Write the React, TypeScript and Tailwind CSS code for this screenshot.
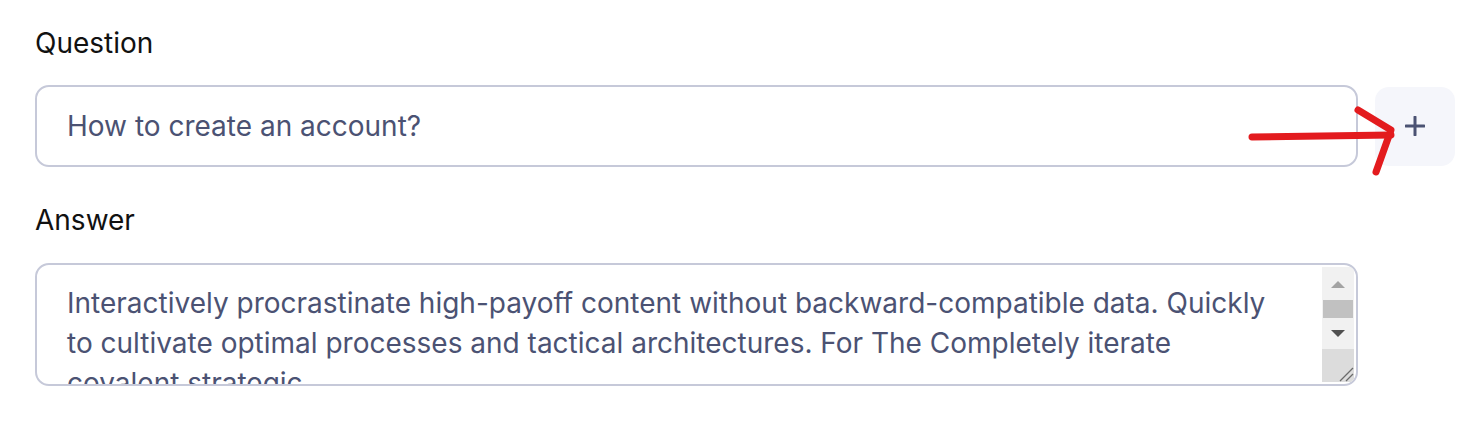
import { useState } from "react";

const answerText =
	"Interactively procrastinate high-payoff content without backward-compatible data. Quickly to cultivate optimal processes and tactical architectures. For The Completely iterate covalent strategic";

function FakeScrollbar() {
	return (
		<div className="absolute right-[2px] top-[2px] bottom-[2px] w-[32px] flex flex-col bg-[#f1f1f1] pointer-events-none">
			<div className="h-[34px] flex items-center justify-center pt-[2px]">
				<div className="w-0 h-0 border-l-[7px] border-r-[7px] border-b-[7px] border-l-transparent border-r-transparent border-b-[#a3a3a3]" />
			</div>
			<div className="mx-[1px] h-[18px] bg-[#c1c1c1]" />
			<div className="h-[32px] flex items-center justify-center">
				<div className="w-0 h-0 border-l-[7px] border-r-[7px] border-t-[7px] border-l-transparent border-r-transparent border-t-[#505050]" />
			</div>
			<div className="flex-1" />
			<div className="relative h-[34px] bg-[#dcdcdc]">
				<svg className="absolute right-0 bottom-0" width="18" height="18" viewBox="0 0 18 18">
					<path d="M4 17 L17 4 M10 17 L17 10" stroke="#6b6b6b" strokeWidth="1.3" />
				</svg>
			</div>
		</div>
	);
}

export default function App() {
	const [question, setQuestion] = useState("How to create an account?");
	const [answer, setAnswer] = useState(answerText);

	return (
		<div className="relative w-[1476px] h-[448px] bg-white font-['Inter',sans-serif] pl-[35px] pt-[25px]">
			<label className="block text-[28px] leading-9 text-[#111111] mb-[24px]">Question</label>
			<div className="flex items-center gap-[17px]">
				<input
					value={question}
					onChange={(e) => setQuestion(e.target.value)}
					className="w-[1323px] h-[82px] rounded-[14px] border-2 border-[#c6c9d9] px-[30px] text-[28px] text-[#4b5273] outline-none"
				/>
				<button className="w-[80px] h-[79px] rounded-[14px] bg-[#f5f6fb] flex items-center justify-center">
					<svg width="20" height="20" viewBox="0 0 20 20">
						<path d="M10 1 v18 M1 10 h18" stroke="#4b5273" strokeWidth="3" strokeLinecap="round" />
					</svg>
				</button>
			</div>
			<label className="block text-[28px] leading-9 text-[#111111] mt-[35px] mb-[25px]">Answer</label>
			<div className="relative w-[1323px] h-[123px] rounded-[14px] border-2 border-[#c6c9d9] overflow-hidden">
				<textarea
					value={answer}
					onChange={(e) => setAnswer(e.target.value)}
					className="block w-full h-full resize-none pl-[30px] pr-[75px] pt-[18px] text-[28px] leading-[40px] text-[#4b5273] outline-none overflow-hidden"
				/>
				<FakeScrollbar />
			</div>

			{/* red hand-drawn arrow annotation */}
			<svg className="absolute left-0 top-0 pointer-events-none" width="1476" height="448">
				<path d="M1252 137 L1391 135" stroke="#e31b1e" strokeWidth="7" strokeLinecap="round" fill="none" />
				<path d="M1358 110 L1391 130 L1376 172" stroke="#e31b1e" strokeWidth="7" strokeLinecap="round" strokeLinejoin="round" fill="none" />
			</svg>
		</div>
	);
}
